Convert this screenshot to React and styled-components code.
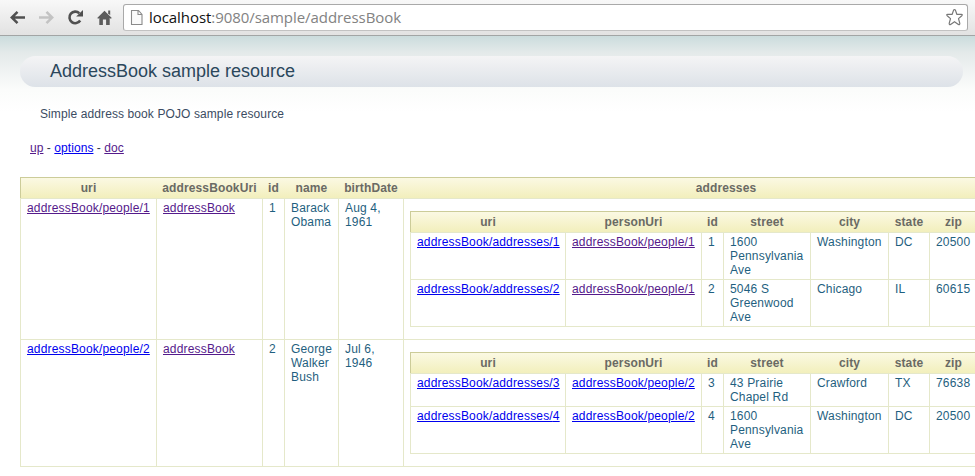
import React from 'react';
import styled, { createGlobalStyle } from 'styled-components';

const GlobalStyle = createGlobalStyle`
  * { box-sizing: border-box; }
  html, body { margin: 0; height: 476px; overflow: hidden; background: #fff; }
`;

const Window = styled.div`
  width: 975px;
  height: 476px;
  overflow: hidden;
  display: flex;
  flex-direction: column;
  font: 12px/14px "Liberation Sans", Arial, sans-serif;
`;

const Toolbar = styled.header`
  flex: none;
  height: 36px;
  display: flex;
  align-items: flex-start;
  background: linear-gradient(#f8f8f8, #e2e2e2);
  border-bottom: 1px solid #a2a5a5;
`;

const NavIcons = styled.nav`
  display: flex;
  gap: 9px;
  padding: 7px 0 0 7px;
  width: 123px;
`;

const Icon = styled.svg`
  display: block;
  flex: none;
  width: 20px;
  height: 20px;
`;

const AddressBar = styled.div`
  flex: none;
  width: 845px;
  height: 27px;
  margin-top: 4px;
  padding: 2px 3px 0;
  display: flex;
  align-items: flex-start;
  background: #fff;
  border: 1px solid #a9a9a9;
  border-bottom-color: #c2c2c2;
  border-radius: 3px;
`;

const Url = styled.span`
  flex: 1;
  margin-left: 2px;
  font: 15px/20px "Open Sans", "Noto Sans", sans-serif;
  letter-spacing: -0.06px;
  color: #828282;
  white-space: nowrap;
`;

const Host = styled.span`
  color: #111;
`;

const Page = styled.main`
  flex: 1;
  min-height: 0;
  overflow: hidden;
  padding: 20px 0 0 20px;
  background: linear-gradient(#cbdcdd 0, #e4eaea 17px, #f0f3f3 35px, #fbfcfb 54px, #fff 76px);
`;

const Title = styled.h1`
  width: 943px;
  height: 31px;
  margin: 0;
  padding: 0 30px;
  border-radius: 16px;
  background: linear-gradient(#f4f4f5, #dde2e8);
  font: 18px/30px "Liberation Sans", Arial, sans-serif;
  color: #2b475c;
`;

const Description = styled.p`
  margin: 20px 0 0 20px;
  color: #3b4c62;
  letter-spacing: 0.1px;
`;

const Links = styled.p`
  margin: 20px 0 0 10px;
  color: #333b4a;
  letter-spacing: 0.06px;
`;

const Link = styled.a`
  color: ${p => (p.$visited ? '#551a8b' : '#0000ee')};
  text-decoration: underline;
`;

const Table = styled.div`
  width: ${p => p.$width}px;
  border-bottom: 1px solid #e5e8ca;
`;

const HeadRow = styled.div`
  display: grid;
  grid-template-columns: ${p => p.$columns};
  height: 21px;
  border-top: 1px solid #cccc99;
  border-left: 1px solid #cccc99;
  background: linear-gradient(#fbf9e3, #f2efbc);
`;

const HeadCell = styled.div`
  padding: 3px 1px 0 0;
  text-align: center;
  font-weight: bold;
  letter-spacing: 0.12px;
  color: #6a6a64;
`;

const Row = styled.div`
  display: grid;
  grid-template-columns: ${p => p.$columns};
  height: ${p => p.$height}px;
  border-top: 1px solid #e5e8ca;
`;

const Cell = styled.div`
  border-left: 1px solid #e5e8ca;
  padding: ${p => (p.$nested ? '12px 0 0 6px' : '2px 0 0 6px')};
  white-space: nowrap;
  letter-spacing: 0.17px;
  color: #1f5f80;
`;

const Line = styled.div`
  height: 14px;
`;

const PEOPLE_COLUMNS = '136px 106px 22px 54px 65px 645px';
const ADDRESS_COLUMNS = '155px 136px 22px 87px 78px 41px 48px 64px';

const people = [
  {
    uri: 'addressBook/people/1', visited: true, id: 1,
    name: ['Barack', 'Obama'], birth: ['Aug 4,', '1961'], height: 141,
    addresses: [
      { id: 1, street: ['1600', 'Pennsylvania', 'Ave'], city: 'Washington', state: 'DC', zip: '20500', height: 47 },
      { id: 2, street: ['5046 S', 'Greenwood', 'Ave'], city: 'Chicago', state: 'IL', zip: '60615', height: 47 },
    ],
  },
  {
    uri: 'addressBook/people/2', visited: false, id: 2,
    name: ['George', 'Walker', 'Bush'], birth: ['Jul 6,', '1946'], height: 127,
    addresses: [
      { id: 3, street: ['43 Prairie', 'Chapel Rd'], city: 'Crawford', state: 'TX', zip: '76638', height: 33 },
      { id: 4, street: ['1600', 'Pennsylvania', 'Ave'], city: 'Washington', state: 'DC', zip: '20500', height: 47 },
    ],
  },
];

const Lines = ({ items }) => items.map(text => <Line key={text}>{text}</Line>);

function Header({ columns, labels }) {
  return (
    <HeadRow $columns={columns}>
      {labels.map(label => <HeadCell key={label}>{label}</HeadCell>)}
    </HeadRow>
  );
}

function AddressTable({ person }) {
  return (
    <Table $width={631}>
      <Header columns={ADDRESS_COLUMNS} labels={['uri', 'personUri', 'id', 'street', 'city', 'state', 'zip']} />
      {person.addresses.map(a => (
        <Row key={a.id} $columns={ADDRESS_COLUMNS} $height={a.height}>
          <Cell><Link>addressBook/addresses/{a.id}</Link></Cell>
          <Cell><Link $visited={person.visited}>{person.uri}</Link></Cell>
          <Cell>{a.id}</Cell>
          <Cell><Lines items={a.street} /></Cell>
          <Cell>{a.city}</Cell>
          <Cell>{a.state}</Cell>
          <Cell>{a.zip}</Cell>
        </Row>
      ))}
    </Table>
  );
}

const PeopleTable = styled(Table)`
  margin-top: 22px;
`;

export default function App() {
  return (
    <Window>
      <GlobalStyle />
      <Toolbar>
        <NavIcons>
          <Icon viewBox="0 0 20 20" fill="none" stroke="#505050" strokeWidth="2.5">
            <path d="M18 10.5H5M10.5 4.9L4.8 10.5L10.5 16.1" />
          </Icon>
          <Icon viewBox="0 0 20 20" fill="none" stroke="#c3c3c3" strokeWidth="2.5">
            <path d="M3 10.5H16M10.5 4.9L16.2 10.5L10.5 16.1" />
          </Icon>
          <Icon viewBox="0 0 20 20">
            <path d="M15.2 13.5A5.8 5.8 0 1 1 14.3 6.2" fill="none" stroke="#505050" strokeWidth="2.6" />
            <path d="M18 3V9.6H11.2Z" fill="#505050" />
          </Icon>
          <Icon viewBox="0 0 20 20" fill="#5c5c5c">
            <path d="M10.5 3.8L3.2 10.9L4.2 11.8L5.3 11V18H8.9V12.5H12.1V18H15.7V11L16.8 11.8L17.8 10.9Z" />
            <path d="M14.2 3.4H16.2V8.2L14.2 6.2Z" />
          </Icon>
        </NavIcons>
        <AddressBar>
          <Icon viewBox="0 0 20 20" fill="#fafafa" stroke="#8a8a8a" strokeWidth="1.1">
            <path d="M4.5 3.5H11.5L15 7.5V17.5H4.5ZM11 3.5V7.5H15" />
          </Icon>
          <Url><Host>localhost</Host>:9080/sample/addressBook</Url>
          <Icon viewBox="0 0 20 20" fill="#fff" stroke="#777" strokeWidth="1.2" strokeLinejoin="round">
            <path d="M10.5 2.6Q11.2 2.6 11.5 3.4L12.8 7.3H17.3Q19 7.5 17.8 8.7L14.5 11.6L15.8 16.4Q15.9 18.1 14.4 17.4L10.5 14.7L6.6 17.4Q5.1 18.1 5.2 16.4L6.5 11.6L3.2 8.7Q2 7.5 3.7 7.3H8.2L9.5 3.4Q9.8 2.6 10.5 2.6Z" />
          </Icon>
        </AddressBar>
      </Toolbar>
      <Page>
        <Title>AddressBook sample resource</Title>
        <Description>Simple address book POJO sample resource</Description>
        <Links><Link $visited>up</Link> - <Link>options</Link> - <Link $visited>doc</Link></Links>
        <PeopleTable $width={1028}>
          <Header columns={PEOPLE_COLUMNS} labels={['uri', 'addressBookUri', 'id', 'name', 'birthDate', 'addresses']} />
          {people.map(p => (
            <Row key={p.id} $columns={PEOPLE_COLUMNS} $height={p.height}>
              <Cell><Link $visited={p.visited}>{p.uri}</Link></Cell>
              <Cell><Link $visited>addressBook</Link></Cell>
              <Cell>{p.id}</Cell>
              <Cell><Lines items={p.name} /></Cell>
              <Cell><Lines items={p.birth} /></Cell>
              <Cell $nested><AddressTable person={p} /></Cell>
            </Row>
          ))}
        </PeopleTable>
      </Page>
    </Window>
  );
}
